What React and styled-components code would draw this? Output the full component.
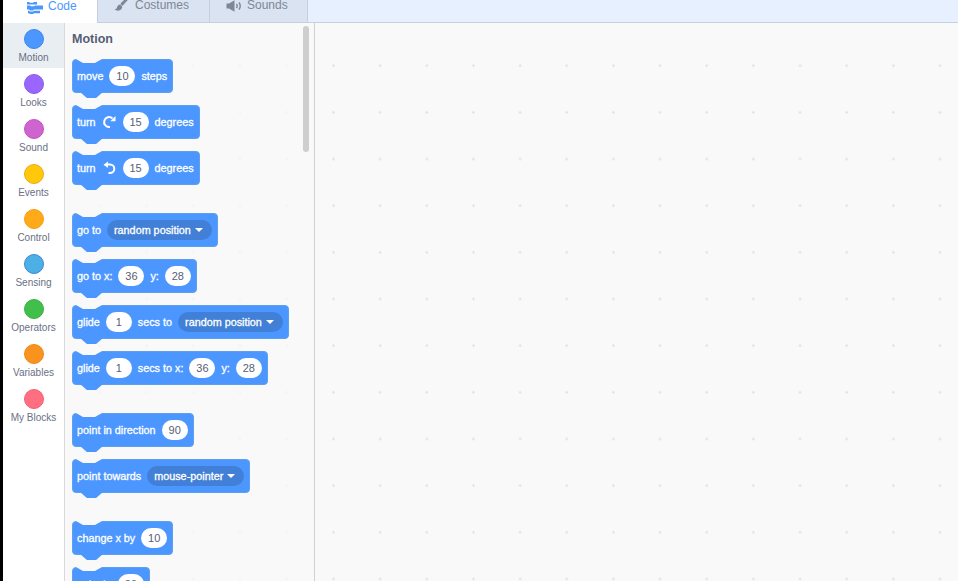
import React from "react";
import styled, { createGlobalStyle } from "styled-components";

const categories = [
  { name: "Motion", color: "#4c97ff", edge: "#3f87ea", active: true },
  { name: "Looks", color: "#9966ff", edge: "#8a5ae8" },
  { name: "Sound", color: "#cf63cf", edge: "#c255c2" },
  { name: "Events", color: "#ffc80a", edge: "#f0a91a" },
  { name: "Control", color: "#ffab19", edge: "#f59c12" },
  { name: "Sensing", color: "#4cb0e6", edge: "#3f87d0" },
  { name: "Operators", color: "#40bf4a", edge: "#3ab043" },
  { name: "Variables", color: "#f7931e", edge: "#f08a12" },
  { name: "My Blocks", color: "#ff6f80", edge: "#f56074" },
];

const App = () => (
  <>
    <GlobalStyle />
    <Page>
      <TabBar>
        <Tab $active $inset={24} $width={95}>
          <CodeIcon />
          Code
        </Tab>
        <Tab $inset={16} $width={112}>
          <BrushIcon />
          Costumes
        </Tab>
        <Tab $inset={16} $width={98}>
          <SpeakerIcon />
          Sounds
        </Tab>
      </TabBar>
      <Editor>
        <Sidebar>
          {categories.map((c) => (
            <Category key={c.name} $active={c.active}>
              <Dot $color={c.color} $edge={c.edge} />
              {c.name}
            </Category>
          ))}
        </Sidebar>
        <Palette>
          <Heading>Motion</Heading>
          <Block>
            move <Input>10</Input> steps
          </Block>
          <Block>
            turn <TurnRight /> <Input>15</Input> degrees
          </Block>
          <Block>
            turn <TurnLeft /> <Input>15</Input> degrees
          </Block>
          <Block $newGroup>
            go to <Menu>random position</Menu>
          </Block>
          <Block>
            go to x: <Input>36</Input> y: <Input>28</Input>
          </Block>
          <Block>
            glide <Input>1</Input> secs to <Menu>random position</Menu>
          </Block>
          <Block>
            glide <Input>1</Input> secs to x: <Input>36</Input> y: <Input>28</Input>
          </Block>
          <Block $newGroup>
            point in direction <Input>90</Input>
          </Block>
          <Block>
            point towards <Menu>mouse-pointer</Menu>
          </Block>
          <Block $newGroup>
            change x by <Input>10</Input>
          </Block>
          <Block>
            set x to <Input>36</Input>
          </Block>
          <Scrollbar />
        </Palette>
        <Workspace />
      </Editor>
    </Page>
  </>
);

export default App;

const CodeIcon = () => (
  <TabIcon width="16" height="12" viewBox="0 0 16 12" $color="#4c97ff">
    <path d="M0 0h2l1 .8h3L7 0h3v2.400H0z" />
    <path d="M0 3.400h3l1 .8h3l1-.8h8v4.200H7l-1 .8H3l-1-.8H0z" />
    <path d="M1 8.800h1l1 .8h3l1-.8h6v2.400H7l-1 .8H3l-1-.8H1z" />
  </TabIcon>
);

const BrushIcon = () => (
  <TabIcon width="16" height="16" viewBox="0 0 16 16" $color="#7f8794">
    <path d="M15.500-2.500 7.200 5.800c-.8.800-.8 1.500 0 2.300.7.700 1.400.7 2.100 0L16 .5z" />
    <path d="M6 7.500c-2.200.2-2.600 2-3.200 3.400-.4.800-1.300 1.300-2.400 1.400 1.800 1.700 5 1.800 6.700.2 1.100-1.100 1.300-2.300.9-3.200z" />
  </TabIcon>
);

const SpeakerIcon = () => (
  <TabIcon width="16" height="14" viewBox="0 0 16 14" $color="#7f8794">
    <path d="M.5 4.500h2.500L8.500 1.200v11.600L3 9.500H.5z" />
    <path d="M10.500 5c.8 1.200.8 2.800 0 4M13 3.500c1.500 2.100 1.500 4.900 0 7" fill="none" stroke="#7f8794" strokeWidth="1.400" />
  </TabIcon>
);

const TurnRight = () => (
  <ArrowIcon width="15" height="14" viewBox="0 0 15 14">
    <path d="M10.500 3.400A5 5 0 1 0 8 12" />
    <path d="M13.500 1v5.200H8.300z" fill="#fff" stroke="none" />
  </ArrowIcon>
);

const TurnLeft = () => (
  <ArrowIcon width="15" height="14" viewBox="0 0 15 14">
    <path d="M4.500 3.400H8A4.300 4.300 0 0 1 8 12H6.500" />
    <path d="M1.500 3.800 6 .6v6.300z" fill="#fff" stroke="none" />
  </ArrowIcon>
);

const GlobalStyle = createGlobalStyle`
  html, body {
    margin: 0;
    height: 100%;
    overflow: hidden;
    background: #000;
  }
  #root {
    height: 100%;
  }
`;

const Page = styled.div`
  height: 581px;
  margin-left: 3px;
  display: flex;
  flex-direction: column;
  background: #fff;
  font-family: "Liberation Sans", Arial, sans-serif;
  overflow: hidden;
`;

const TabBar = styled.div`
  flex: none;
  height: 22px;
  display: flex;
  align-items: stretch;
  background: #e6f0ff;
  border-bottom: 1px solid #c5cfdf;
`;

const Tab = styled.div`
  display: flex;
  align-items: flex-end;
  gap: 5px;
  width: ${(p) => p.$width}px;
  padding: 0 0 10px ${(p) => p.$inset}px;
  box-sizing: border-box;
  font-size: 12px;
  line-height: 14px;
  color: ${(p) => (p.$active ? "#4c97ff" : "#7f8794")};
  background: ${(p) => (p.$active ? "#fff" : "#d9e3f2")};
  border-right: 1px solid #c5cfdf;
  margin-bottom: ${(p) => (p.$active ? "-1px" : "0")};
`;

const TabIcon = styled.svg`
  flex: none;
  fill: ${(p) => p.$color};
  margin-bottom: -1px;
`;

const Editor = styled.div`
  flex: 1;
  min-height: 0;
  display: flex;
`;

const Sidebar = styled.div`
  flex: none;
  width: 61px;
  background: #fff;
  border-right: 1px solid #d9d9d9;
`;

const Category = styled.div`
  height: 45px;
  box-sizing: border-box;
  padding-top: 6px;
  display: flex;
  flex-direction: column;
  align-items: center;
  gap: 3px;
  font-size: 10px;
  line-height: 12px;
  color: #6a7085;
  background: ${(p) => (p.$active ? "#e9eef2" : "transparent")};
`;

const Dot = styled.span`
  width: 20px;
  height: 20px;
  box-sizing: border-box;
  border-radius: 50%;
  background: ${(p) => p.$color};
  border: 1px solid ${(p) => p.$edge};
`;

const Palette = styled.div`
  position: relative;
  flex: none;
  width: 250px;
  box-sizing: border-box;
  padding: 8px 0 0 7px;
  overflow: hidden;
  background-color: #f9f9f9;
  background-image: radial-gradient(circle at center, #f4f4f4 1px, transparent 1.5px);
  background-size: 46.67px 46.67px;
  background-position: 11.67px 19.4px;
  border-right: 1px solid #d0d0d0;
`;

const Heading = styled.div`
  font-size: 12.5px;
  font-weight: 700;
  line-height: 16px;
  color: #575e75;
  margin-bottom: 12px;
`;

const Block = styled.div`
  position: relative;
  width: fit-content;
  height: 34px;
  box-sizing: border-box;
  display: flex;
  align-items: center;
  gap: 6px;
  padding: 0 5px 0 4px;
  margin-top: ${(p) => (p.$newGroup ? "28px" : "12px")};
  font-size: 10.8px;
  white-space: nowrap;
  color: #fff;
  -webkit-text-stroke: 0.3px #fff;
  background: #4c97ff;
  border: 1px solid #5f9ff0;
  border-radius: 4px;
  &:first-of-type {
    margin-top: 0;
  }
  &::before {
    content: "";
    position: absolute;
    top: -1px;
    left: 3px;
    width: 26px;
    height: 4px;
    background: #f9f9f9;
    clip-path: polygon(0 0, 100% 0, 73% 100%, 27% 100%);
  }
  &::after {
    content: "";
    position: absolute;
    bottom: -6px;
    left: 7px;
    width: 23px;
    height: 6px;
    background: #4c97ff;
    clip-path: polygon(0 0, 100% 0, 70% 100%, 30% 100%);
  }
`;

const Input = styled.span`
  flex: none;
  min-width: 26px;
  height: 20px;
  box-sizing: border-box;
  padding: 0 6px;
  display: flex;
  align-items: center;
  justify-content: center;
  border-radius: 10px;
  background: #fff;
  color: #575e75;
  font-size: 11px;
  -webkit-text-stroke: 0;
`;

const Menu = styled.span`
  flex: none;
  height: 20px;
  padding: 0 9px 0 7px;
  display: flex;
  align-items: center;
  gap: 4px;
  border-radius: 10px;
  background: #4280d7;
  &::after {
    content: "";
    width: 0;
    height: 0;
    border-left: 4px solid transparent;
    border-right: 4px solid transparent;
    border-top: 4px solid #fff;
  }
`;

const ArrowIcon = styled.svg`
  flex: none;
  fill: none;
  stroke: #fff;
  stroke-width: 2;
`;

const Scrollbar = styled.div`
  position: absolute;
  top: 3px;
  left: 238px;
  width: 6px;
  height: 126px;
  border-radius: 3px;
  background: #cecece;
`;

const Workspace = styled.div`
  flex: 1;
  background-color: #f9f9f9;
  background-image: radial-gradient(circle at center, #e4e4e4 1px, transparent 1.5px);
  background-size: 46.67px 46.67px;
  background-position: -4.83px 19.4px;
`;
